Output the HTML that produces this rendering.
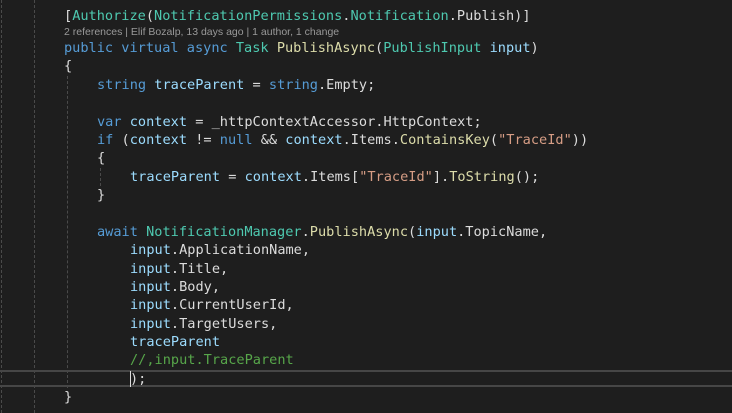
<!DOCTYPE html>
<html><head><style>
html,body{margin:0;padding:0;background:#1e1e1e;width:732px;height:413px;overflow:hidden}
.c{position:absolute;left:0;font-family:"DejaVu Sans Mono","Liberation Mono",monospace;font-size:13.6px;color:#dcdcdc;white-space:pre;line-height:18px}
.k{color:#569cd6}.t{color:#4ec9b0}.m{color:#dcdcaa}.v{color:#9cdcfe}.s{color:#d69d85}.g{color:#57a64a}
.lens{position:absolute;left:64px;top:26px;font-family:"Liberation Sans",sans-serif;font-size:10.5px;color:#999}
.gd{position:absolute;width:0;border-left:1px dashed #4a4a4a}
.cur{position:absolute;left:0;top:370px;width:732px;height:17px;border-top:2px solid #464646;border-bottom:2px solid #464646;box-sizing:border-box}
.caret{position:absolute;left:130px;top:371px;width:1px;height:16px;background:#dcdcdc}
</style></head><body>
<div class="gd" style="left:1px;top:0;height:413px"></div>
<div class="gd" style="left:34px;top:0;height:413px"></div>
<div class="gd" style="left:67px;top:76px;height:312px"></div>
<div class="gd" style="left:100px;top:168px;height:18px"></div>
<div class="cur"></div>
<div class="c" style="left:64px;top:7px">[<span class="t">Authorize</span>(<span class="t">NotificationPermissions</span>.<span class="t">Notification</span>.Publish)]</div>
<div class="lens">2 references | Elif Bozalp, 13 days ago | 1 author, 1 change</div>
<div class="c" style="left:64px;top:39px"><span class="k">public virtual async</span> <span class="t">Task</span> <span class="m">PublishAsync</span>(<span class="t">PublishInput</span> <span class="v">input</span>)</div>
<div class="c" style="left:64px;top:57px">{</div>
<div class="c" style="left:97px;top:76px"><span class="k">string</span> <span class="v">traceParent</span> = <span class="k">string</span>.Empty;</div>
<div class="c" style="left:97px;top:113px"><span class="k">var</span> <span class="v">context</span> = _httpContextAccessor.HttpContext;</div>
<div class="c" style="left:97px;top:131px"><span class="k">if</span> (<span class="v">context</span> != <span class="k">null</span> &amp;&amp; <span class="v">context</span>.Items.<span class="m">ContainsKey</span>(<span class="s">"TraceId"</span>))</div>
<div class="c" style="left:97px;top:149px">{</div>
<div class="c" style="left:130px;top:168px"><span class="v">traceParent</span> = <span class="v">context</span>.Items[<span class="s">"TraceId"</span>].<span class="m">ToString</span>();</div>
<div class="c" style="left:97px;top:186px">}</div>
<div class="c" style="left:97px;top:223px"><span class="k">await</span> <span class="t">NotificationManager</span>.<span class="m">PublishAsync</span>(<span class="v">input</span>.TopicName,</div>
<div class="c" style="left:130px;top:241px"><span class="v">input</span>.ApplicationName,</div>
<div class="c" style="left:130px;top:260px"><span class="v">input</span>.Title,</div>
<div class="c" style="left:130px;top:278px"><span class="v">input</span>.Body,</div>
<div class="c" style="left:130px;top:296px"><span class="v">input</span>.CurrentUserId,</div>
<div class="c" style="left:130px;top:315px"><span class="v">input</span>.TargetUsers,</div>
<div class="c" style="left:130px;top:333px"><span class="v">traceParent</span></div>
<div class="c" style="left:130px;top:351px"><span class="g">//,input.TraceParent</span></div>
<div class="c" style="left:130px;top:370px">);</div>
<div class="caret"></div>
<div class="c" style="left:64px;top:388px">}</div>
</body></html>
